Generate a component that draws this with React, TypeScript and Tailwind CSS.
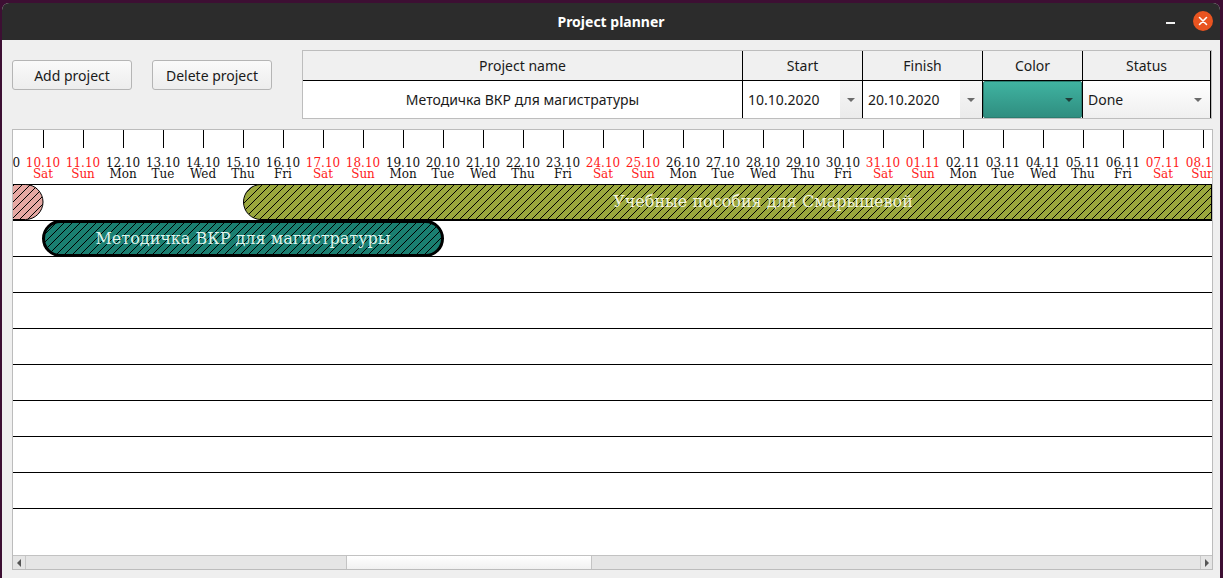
import React from 'react';

const DAY_NAMES = ['Sun', 'Mon', 'Tue', 'Wed', 'Thu', 'Fri', 'Sat'];

// one column per day, 10.10.2020 sits at x = 30 in the chart
const days = Array.from({ length: 31 }, (_, i) => {
  const k = i - 1;
  const d = new Date(2020, 9, 10 + k);
  const dd = String(d.getDate()).padStart(2, '0');
  const mm = String(d.getMonth() + 1).padStart(2, '0');
  const wd = d.getDay();
  return { x: 30 + 40 * k, date: `${dd}.${mm}`, name: DAY_NAMES[wd], weekend: wd === 0 || wd === 6 };
});

const rows = Array.from({ length: 10 }, (_, i) => 54 + 36 * i);

function Arrow({ color = 'border-t-[#6b6b6b]' }: { color?: string }) {
  return <span className={`block w-0 h-0 border-l-[4px] border-r-[4px] border-t-[4px] border-l-transparent border-r-transparent ${color}`} />;
}

function DateCombo({ value }: { value: string }) {
  return (
    <div className="flex h-full w-full bg-white">
      <div className="flex-1 flex items-center pl-[5px] text-[14px] text-[#1a1a1a]">{value}</div>
      <div className="w-[22px] flex items-center justify-center bg-gradient-to-b from-[#f6f6f6] to-[#ebebeb]">
        <Arrow />
      </div>
    </div>
  );
}

function Timeline() {
  return (
    <svg width={1199} height={425} className="block" style={{ fontFamily: '"DejaVu Serif", serif' }}>
      <defs>
        <pattern id="hatch" patternUnits="userSpaceOnUse" width={8} height={8}>
          <path d="M-2,2 l4,-4 M0,8 l8,-8 M6,10 l4,-4" stroke="#000" strokeWidth={1} />
        </pattern>
      </defs>

      {/* scale */}
      {days.map((d) => (
        <g key={d.date}>
          <line x1={d.x + 0.5} y1={0} x2={d.x + 0.5} y2={18} stroke="#000" strokeWidth={1} />
          <text x={d.x} y={37} textAnchor="middle" fontSize={12} fill={d.weekend ? '#ff1a1a' : '#111'}>
            {d.date}
          </text>
          <text x={d.x} y={48} textAnchor="middle" fontSize={12} fill={d.weekend ? '#ff1a1a' : '#111'}>
            {d.name}
          </text>
        </g>
      ))}

      {/* rows */}
      {rows.map((y) => (
        <line key={y} x1={0} y1={y + 0.5} x2={1199} y2={y + 0.5} stroke="#000" strokeWidth={1} />
      ))}

      {/* pink bar, mostly off-screen */}
      <rect x={-60} y={54.5} width={90} height={35} rx={17.5} fill="#e6a8a3" />
      <rect x={-60} y={54.5} width={90} height={35} rx={17.5} fill="url(#hatch)" stroke="#000" strokeWidth={1} />

      {/* olive bar, clipped on the right */}
      <path d="M248,54.5 H1198.5 V89.5 H248 A17.5,17.5 0 0 1 248,54.5 Z" fill="#9aa73d" />
      <path d="M248,54.5 H1198.5 V89.5 H248 A17.5,17.5 0 0 1 248,54.5 Z" fill="url(#hatch)" stroke="#000" strokeWidth={1} />
      <text x={750} y={77} textAnchor="middle" fontSize={16} fill="#f2f3df">
        Учебные пособия для Смарышевой
      </text>

      {/* teal bar, selected */}
      <rect x={30.5} y={91.5} width={399} height={34} rx={17} fill="#1a7f71" />
      <rect x={30.5} y={91.5} width={399} height={34} rx={17} fill="url(#hatch)" stroke="#000" strokeWidth={3} />
      <text x={230} y={114} textAnchor="middle" fontSize={16} fill="#dff3ec">
        Методичка ВКР для магистратуры
      </text>
    </svg>
  );
}

export default function App() {
  return (
    <div className="w-[1223px] h-[578px] bg-[#3d0f33] overflow-hidden font-['Noto_Sans',sans-serif]">
      <div className="ml-[2px] mt-[3px] w-[1218px] h-[575px] flex flex-col bg-[#efefef] rounded-t-[7px] overflow-hidden">
        {/* title bar */}
        <div className="relative h-[37px] shrink-0 bg-[#2c2c2c] flex items-center justify-center">
          <span className="text-white text-[14px] font-bold">Project planner</span>
          <span className="absolute left-[1164px] top-[19px] w-[9px] h-[2px] bg-[#f2f2f2]" />
          <span className="absolute left-[1191px] top-[8px] w-[20px] h-[20px] rounded-full bg-[#e95420] flex items-center justify-center">
            <svg width="10" height="10" viewBox="0 0 10 10">
              <path d="M1.5,1.5 L8.5,8.5 M8.5,1.5 L1.5,8.5" stroke="#fff" strokeWidth={1.6} strokeLinecap="round" />
            </svg>
          </span>
        </div>

        <div className="pl-[10px] pt-[10px] flex flex-col">
          {/* toolbar + editor table */}
          <div className="flex items-start">
            <button className="mt-[10px] w-[120px] h-[30px] rounded-[3px] border border-[#b5b5b5] bg-gradient-to-b from-[#fafafa] to-[#ededed] text-[14px] text-[#1a1a1a]">
              Add project
            </button>
            <button className="mt-[10px] ml-[20px] w-[120px] h-[30px] rounded-[3px] border border-[#b5b5b5] bg-gradient-to-b from-[#fafafa] to-[#ededed] text-[14px] text-[#1a1a1a]">
              Delete project
            </button>
            <div className="ml-[30px] w-[910px] border border-[#bdbdbd] text-[14px] text-[#1a1a1a]">
              <div className="flex h-[30px] bg-[#f0f0f0] border-b border-black">
                <div className="w-[439px] flex items-center justify-center">Project name</div>
                <div className="w-[120px] border-l border-black flex items-center justify-center">Start</div>
                <div className="w-[120px] border-l border-black flex items-center justify-center">Finish</div>
                <div className="w-[100px] border-l border-black flex items-center justify-center">Color</div>
                <div className="w-[129px] border-l border-r border-black flex items-center justify-center">Status</div>
              </div>
              <div className="flex h-[37px] bg-white">
                <div className="w-[439px] flex items-center justify-center">Методичка ВКР для магистратуры</div>
                <div className="w-[120px] border-l border-black">
                  <DateCombo value="10.10.2020" />
                </div>
                <div className="w-[120px] border-l border-black">
                  <DateCombo value="20.10.2020" />
                </div>
                <div className="w-[100px] border-l border-black">
                  <div className="h-full flex items-center justify-end pr-[8px] rounded-[2px] border border-[#2b7d70] bg-gradient-to-b from-[#40b3a1] to-[#2f8e80]">
                    <Arrow color="border-t-[#1f3d38]" />
                  </div>
                </div>
                <div className="w-[129px] border-l border-r border-black">
                  <div className="h-full flex items-center justify-between pl-[5px] pr-[8px] bg-gradient-to-b from-white to-[#efefef]">
                    <span>Done</span>
                    <Arrow />
                  </div>
                </div>
              </div>
            </div>
          </div>

          {/* gantt chart */}
          <div className="mt-[10px] w-[1201px] h-[441px] border border-[#bcbcbc] bg-white flex flex-col">
            <Timeline />
            <div className="h-[14px] flex border-t border-[#c2c2c2] bg-[#e5e5e5]">
              <div className="w-[13px] border-r border-[#c8c8c8] flex items-center justify-center">
                <span className="block w-0 h-0 border-t-[4px] border-b-[4px] border-r-[4px] border-t-transparent border-b-transparent border-r-[#555]" />
              </div>
              <div className="flex-1 flex">
                <div className="ml-[320px] w-[246px] h-full border-l border-r border-[#c4c4c4] bg-gradient-to-b from-white to-[#f1f1f1]" />
              </div>
              <div className="w-[12px] border-l border-[#c8c8c8] flex items-center justify-center">
                <span className="block w-0 h-0 border-t-[4px] border-b-[4px] border-l-[4px] border-t-transparent border-b-transparent border-l-[#555]" />
              </div>
            </div>
          </div>
        </div>
      </div>
    </div>
  );
}
